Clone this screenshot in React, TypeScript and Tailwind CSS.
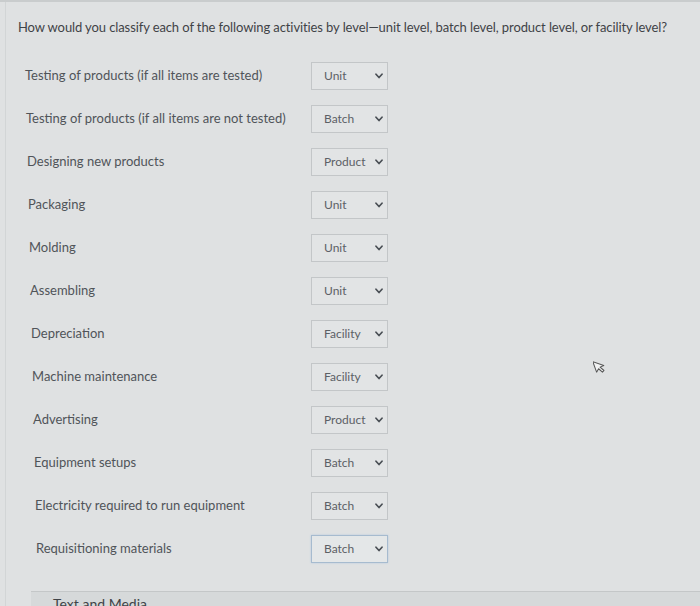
import React from "react";

const rows: { label: string; value: string; focus?: boolean }[] = [
  { label: "Testing of products (if all items are tested)", value: "Unit" },
  { label: "Testing of products (if all items are not tested)", value: "Batch" },
  { label: "Designing new products", value: "Product" },
  { label: "Packaging", value: "Unit" },
  { label: "Molding", value: "Unit" },
  { label: "Assembling", value: "Unit" },
  { label: "Depreciation", value: "Facility" },
  { label: "Machine maintenance", value: "Facility" },
  { label: "Advertising", value: "Product" },
  { label: "Equipment setups", value: "Batch" },
  { label: "Electricity required to run equipment", value: "Batch" },
  { label: "Requisitioning materials", value: "Batch", focus: true },
];

function Chevron() {
  return (
    <svg width="8" height="6" viewBox="0 0 8 6" className="shrink-0">
      <path d="M1 1.2 L4 4.5 L7 1.2" fill="none" stroke="#4a4f55" strokeWidth="1.7" strokeLinecap="round" strokeLinejoin="round" />
    </svg>
  );
}

export default function App() {
  return (
    <div
      className="w-[700px] h-[606px] overflow-hidden bg-[#dfe1e2] relative"
      style={{ fontFamily: "Lato, 'Open Sans', sans-serif" }}
    >
      <div className="h-[2px] bg-[#c9cccd]" />
      <div className="ml-[5px] border-l border-[#d2d5d6] h-[604px] flex flex-col">
        <div className="pl-[12px] pt-[17px] text-[13px] text-[#3f4347] tracking-[-0.1px] leading-[16px]">
          How would you classify each of the following activities by level—unit level, batch level, product level, or facility level?
        </div>
        <div className="mt-[19px] flex flex-col">
          {rows.map((r, i) => (
            <div key={i} className="h-[43px] flex items-center">
              <div
                className="w-[305px] text-[13px] text-[#505459]"
                style={{ paddingLeft: 19 + i }}
              >
                {r.label}
              </div>
              <div
                className={
                  "w-[77px] h-[28px] border flex items-center justify-between pl-[12px] pr-[4px] text-[12px] text-[#5c6065] " +
                  (r.focus
                    ? "border-[#a6bbcf] bg-[#e4e7e8] shadow-[0_0_2px_#b8cbe0]"
                    : "border-[#c3c6c8] bg-[#e2e4e5]")
                }
              >
                <span>{r.value}</span>
                <Chevron />
              </div>
            </div>
          ))}
        </div>
        <div className="mt-[21px] ml-[25px] flex-1 bg-[#d6d9da] border-t border-[#c4c7c8] pl-[22px] pt-[4px] text-[14px] text-[#3f4347] leading-[16px]">
          Text and Media
        </div>
      </div>
      <svg width="14" height="16" viewBox="0 0 14 16" className="absolute left-[593px] top-[359px]">
        <path d="M2 1 L2 12 L5 9.5 L7.5 14 L9.5 13 L7 8.5 L11 8.3 Z" fill="#f2f3f3" stroke="#555" strokeWidth="1" strokeLinejoin="round" transform="rotate(-20 6 8)" />
      </svg>
    </div>
  );
}
